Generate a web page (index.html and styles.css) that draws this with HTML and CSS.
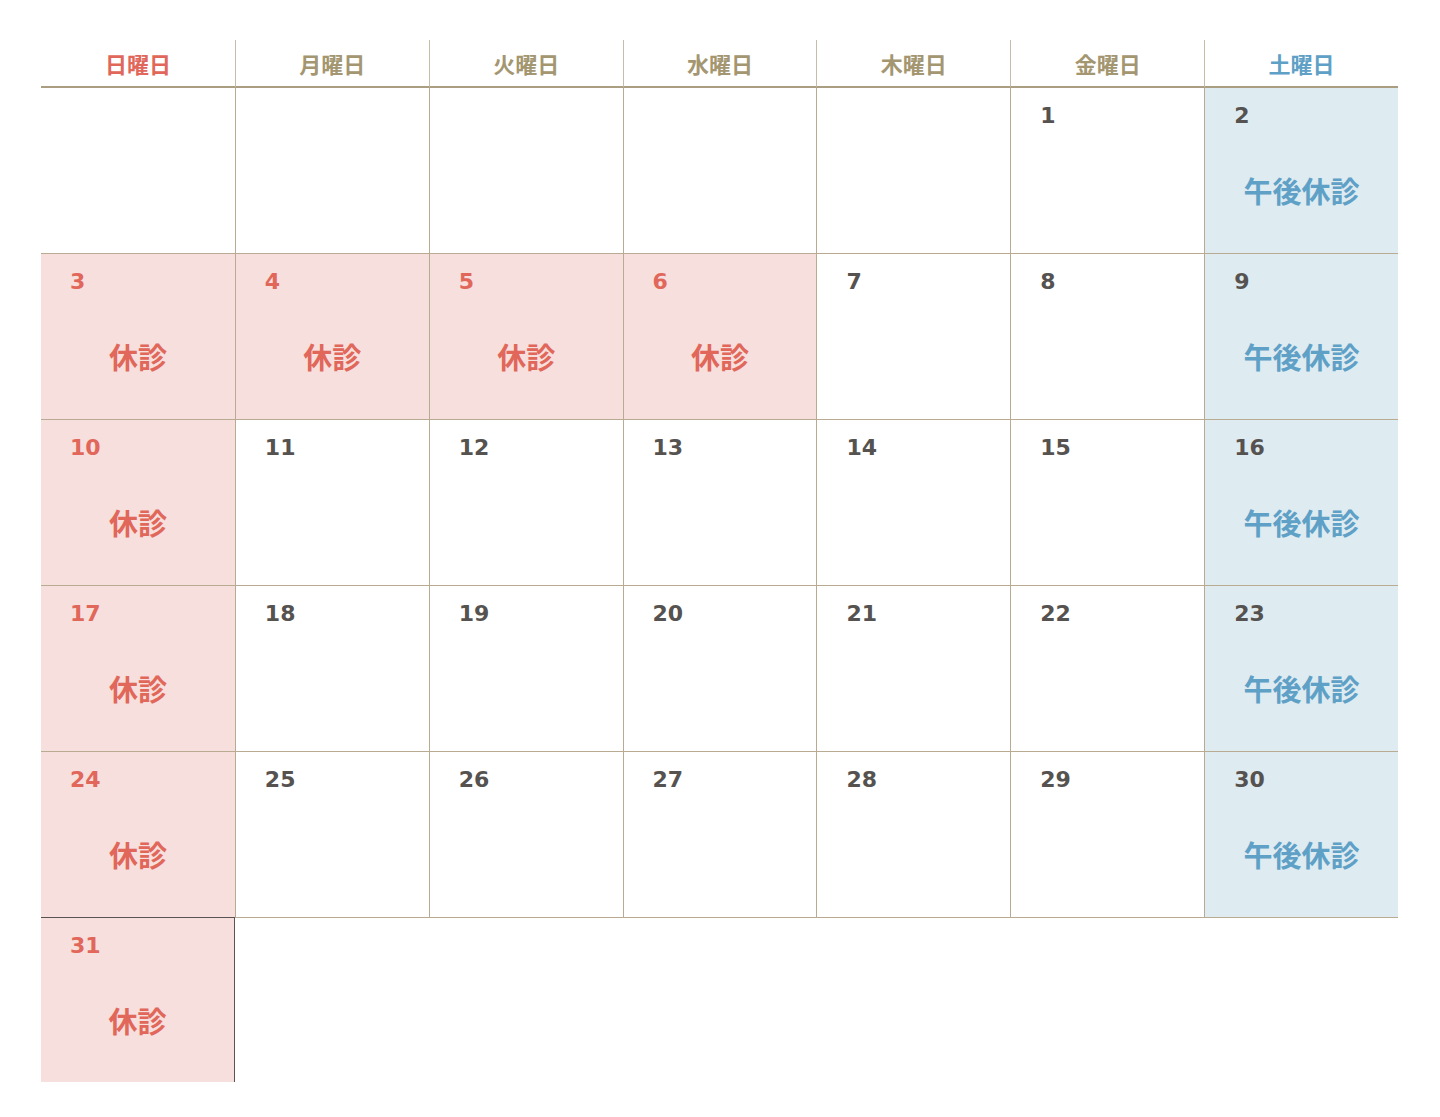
FILE: index.html
```html
<!DOCTYPE html>
<html lang="ja">
<head>
<meta charset="utf-8">
<title>カレンダー</title>
<link rel="stylesheet" href="styles.css">
</head>
<body>
<div class="calendar">
  <div class="head sun">日曜日</div>
  <div class="head">月曜日</div>
  <div class="head">火曜日</div>
  <div class="head">水曜日</div>
  <div class="head">木曜日</div>
  <div class="head">金曜日</div>
  <div class="head sat">土曜日</div>

  <div class="cell first"></div>
  <div class="cell"></div>
  <div class="cell"></div>
  <div class="cell"></div>
  <div class="cell"></div>
  <div class="cell"><div class="num">1</div></div>
  <div class="cell sat"><div class="num">2</div><div class="label">午後休診</div></div>

  <div class="cell first closed"><div class="num">3</div><div class="label">休診</div></div>
  <div class="cell closed"><div class="num">4</div><div class="label">休診</div></div>
  <div class="cell closed"><div class="num">5</div><div class="label">休診</div></div>
  <div class="cell closed"><div class="num">6</div><div class="label">休診</div></div>
  <div class="cell"><div class="num">7</div></div>
  <div class="cell"><div class="num">8</div></div>
  <div class="cell sat"><div class="num">9</div><div class="label">午後休診</div></div>

  <div class="cell first closed"><div class="num">10</div><div class="label">休診</div></div>
  <div class="cell"><div class="num">11</div></div>
  <div class="cell"><div class="num">12</div></div>
  <div class="cell"><div class="num">13</div></div>
  <div class="cell"><div class="num">14</div></div>
  <div class="cell"><div class="num">15</div></div>
  <div class="cell sat"><div class="num">16</div><div class="label">午後休診</div></div>

  <div class="cell first closed"><div class="num">17</div><div class="label">休診</div></div>
  <div class="cell"><div class="num">18</div></div>
  <div class="cell"><div class="num">19</div></div>
  <div class="cell"><div class="num">20</div></div>
  <div class="cell"><div class="num">21</div></div>
  <div class="cell"><div class="num">22</div></div>
  <div class="cell sat"><div class="num">23</div><div class="label">午後休診</div></div>

  <div class="cell first closed"><div class="num">24</div><div class="label">休診</div></div>
  <div class="cell"><div class="num">25</div></div>
  <div class="cell"><div class="num">26</div></div>
  <div class="cell"><div class="num">27</div></div>
  <div class="cell"><div class="num">28</div></div>
  <div class="cell"><div class="num">29</div></div>
  <div class="cell sat"><div class="num">30</div><div class="label">午後休診</div></div>

  <div class="cell first closed last"><div class="num">31</div><div class="label">休診</div></div>
</div>
</body>
</html>
```

FILE: styles.css
```css
* { box-sizing: border-box; }
html, body { margin: 0; padding: 0; background: #ffffff; }
body {
  font-family: "DejaVu Sans", "Noto Sans CJK JP", sans-serif;
  font-weight: bold;
}
.calendar {
  margin: 40px 0 0 41px;
  width: 1357px;
  display: grid;
  grid-template-columns: repeat(7, 1fr);
}
.head {
  height: 48px;
  display: flex;
  align-items: center;
  justify-content: center;
  padding-bottom: 1px;
  font-family: "Noto Sans CJK JP", sans-serif;
  font-size: 22px;
  font-weight: bold;
  color: #a39670;
  border-left: 1px solid #c6bcaa;
  border-bottom: 2px solid #ab9d82;
}
.head.sun { color: #e0675a; border-left: none; }
.head.sat { color: #5fa0c6; }
.cell {
  height: 166px;
  border-left: 1px solid #b8ab92;
  border-bottom: 1px solid #b8ab92;
  padding: 15px 0 0 0;
}
.cell.first { border-left: none; }
.cell.closed { background: #f7dfdd; }
.cell.sat { background: #deebf1; }
.num {
  padding-left: 29px;
  font-size: 22px;
  line-height: 26px;
  color: #555250;
}
.closed .num { color: #e0675a; }
.label {
  margin-top: 44px;
  text-align: center;
  font-family: "Noto Sans CJK JP", sans-serif;
  font-size: 29px;
  line-height: 34px;
  font-weight: bold;
}
.closed .label { color: #e0675a; }
.sat .label { color: #5fa0c6; }
.cell.last {
  height: 165px;
  border-top: 1px solid #5a5250;
  border-right: 1px solid #5a5250;
  border-bottom: none;
  margin-top: -1px;
}
```
